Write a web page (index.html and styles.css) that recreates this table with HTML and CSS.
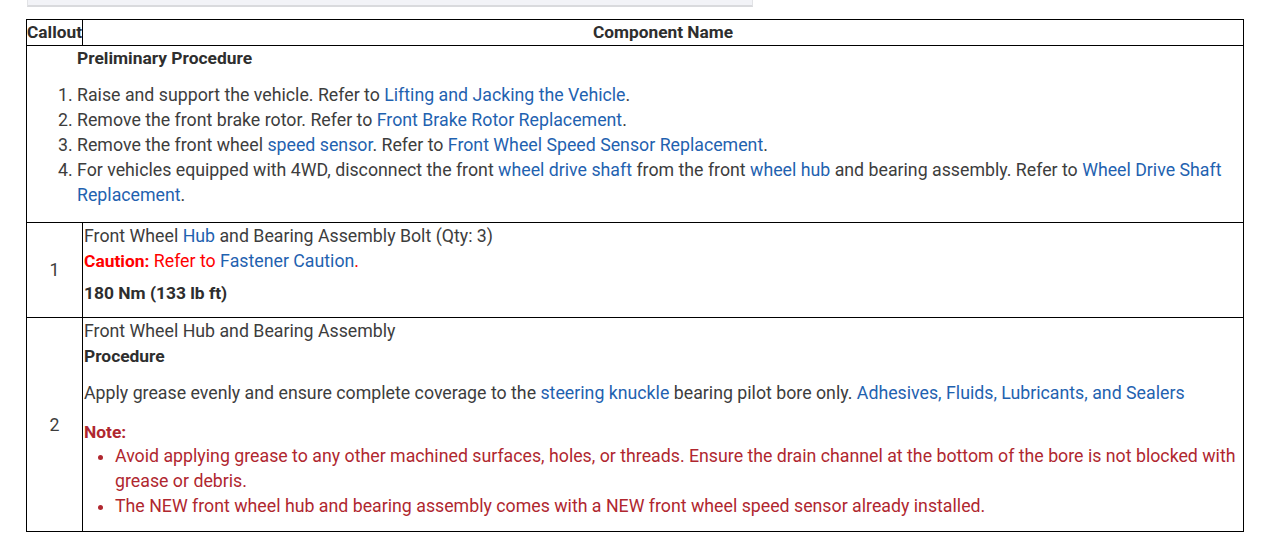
FILE: index.html
```html
<!DOCTYPE html>
<html>
<head>
<meta charset="utf-8">
<link rel="stylesheet" href="styles.css">
</head>
<body>
<div class="topbox"></div>
<table class="comp">
  <thead>
    <tr><th class="c-callout">Callout</th><th class="c-name">Component Name</th></tr>
  </thead>
  <tbody>
    <tr>
      <td colspan="2" class="prelim">
        <div class="prelim-title">Preliminary Procedure</div>
        <ol class="steps">
          <li>Raise and support the vehicle. Refer to <a href="#">Lifting and Jacking the Vehicle</a>.</li>
          <li>Remove the front brake rotor. Refer to <a href="#">Front Brake Rotor Replacement</a>.</li>
          <li>Remove the front wheel <a href="#">speed sensor</a>. Refer to <a href="#">Front Wheel Speed Sensor Replacement</a>.</li>
          <li>For vehicles equipped with 4WD, disconnect the front <a href="#">wheel drive shaft</a> from the front <a href="#">wheel hub</a> and bearing assembly. Refer to <a href="#">Wheel Drive Shaft Replacement</a>.</li>
        </ol>
      </td>
    </tr>
    <tr>
      <td class="num">1</td>
      <td class="desc">
        <div>Front Wheel <a href="#">Hub</a> and Bearing Assembly Bolt (Qty: 3)</div>
        <div class="caution"><b>Caution:</b> Refer to <a href="#">Fastener Caution</a>.</div>
        <p class="torque">180 Nm (133 lb ft)</p>
      </td>
    </tr>
    <tr>
      <td class="num">2</td>
      <td class="desc">
        <div>Front Wheel Hub and Bearing Assembly</div>
        <div class="strong">Procedure</div>
        <p class="para">Apply grease evenly and ensure complete coverage to the <a href="#">steering knuckle</a> bearing pilot bore only. <a href="#">Adhesives, Fluids, Lubricants, and Sealers</a></p>
        <div class="note">
          <div class="note-title">Note:</div>
          <ul class="note-list">
            <li>Avoid applying grease to any other machined surfaces, holes, or threads. Ensure the drain channel at the bottom of the bore is not blocked with grease or debris.</li>
            <li>The NEW front wheel hub and bearing assembly comes with a NEW front wheel speed sensor already installed.</li>
          </ul>
        </div>
      </td>
    </tr>
  </tbody>
</table>
</body>
</html>
```
FILE: styles.css
```css
html, body {
  margin: 0;
  padding: 0;
  background: #fff;
}
body {
  font-family: Roboto, "Liberation Sans", sans-serif;
  font-size: 17.75px;
  line-height: 25px;
  color: #3d3d3d;
}
a {
  color: #1f62b0;
  text-decoration: none;
}
.topbox {
  margin-left: 27px;
  width: 724px;
  height: 5px;
  background: #f2f3f7;
  border: 1px solid #e2e3e6;
  border-top: none;
  border-bottom: 2px solid #d9dadd;
}
.comp {
  margin: 12px 0 0 26px;
  width: 1218px;
  border-collapse: collapse;
}
.comp th, .comp td {
  border: 1px solid #000;
  padding: 0 1px;
}
.comp th {
  font-size: 17.3px;
  font-weight: bold;
  color: #2e2e2e;
  line-height: 25px;
  padding: 0;
}
.c-callout {
  width: 55px;
  text-align: left;
}
.c-name {
  text-align: center;
}
.prelim {
  padding: 0 0 14px 50px !important;
}
.prelim-title {
  font-weight: bold;
  font-size: 17.4px;
  color: #2e2e2e;
}
.steps {
  margin: 12px 0 0;
  padding-left: 0;
  list-style-position: outside;
}
.num {
  text-align: center;
  vertical-align: middle;
  color: #3d3d3d;
  padding-top: 1px !important;
}
.desc {
  vertical-align: top;
  padding: 1px 1px 11px 1px !important;
}
.caution {
  color: #ff0000;
}
.caution b {
  font-weight: bold;
  font-size: 17.4px;
}
.torque {
  margin: 7px 0 0;
  font-weight: bold;
  font-size: 17.4px;
  color: #2e2e2e;
}
.strong {
  font-weight: bold;
  font-size: 17.4px;
  color: #2e2e2e;
}
.para {
  margin: 12px 0 0;
}
.note {
  margin-top: 14px;
  padding-bottom: 1px;
  color: #b0272f;
}
.note-title {
  font-weight: bold;
  font-size: 17.4px;
  line-height: 24px;
}
.note-list {
  margin: 0;
  padding-left: 31px;
}
```
